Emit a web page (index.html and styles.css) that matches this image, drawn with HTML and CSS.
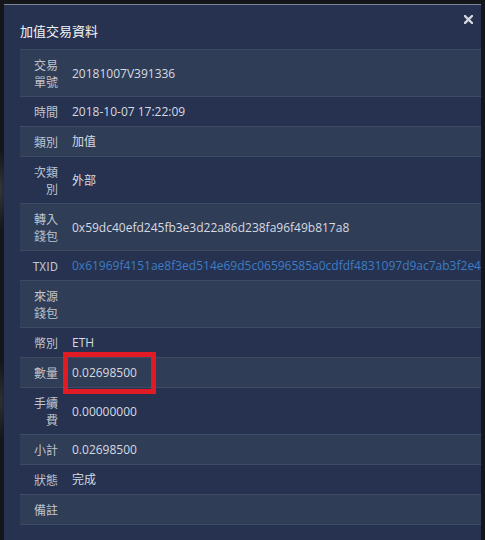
FILE: index.html
```html
<!DOCTYPE html>
<html lang="zh-Hant">
<head>
<meta charset="utf-8">
<title>加值交易資料</title>
<link rel="stylesheet" href="styles.css">
</head>
<body>
<div class="modal">
  <button class="close" aria-label="close">
    <svg width="9" height="9" viewBox="0 0 9 9"><path d="M1 1 L8 8 M8 1 L1 8" stroke="#d3d7de" stroke-width="2.4" stroke-linecap="square"/></svg>
  </button>
  <h1 class="title">加值交易資料</h1>
  <div class="table">
    <div class="row alt"><div class="label">交易單號</div><div class="value">20181007V391336</div></div>
    <div class="row"><div class="label">時間</div><div class="value">2018-10-07 17:22:09</div></div>
    <div class="row alt"><div class="label">類別</div><div class="value">加值</div></div>
    <div class="row"><div class="label">次類別</div><div class="value">外部</div></div>
    <div class="row alt"><div class="label">轉入錢包</div><div class="value">0x59dc40efd245fb3e3d22a86d238fa96f49b817a8</div></div>
    <div class="row"><div class="label">TXID</div><div class="value link">0x61969f4151ae8f3ed514e69d5c06596585a0cdfdf4831097d9ac7ab3f2e47</div></div>
    <div class="row alt"><div class="label">來源錢包</div><div class="value"></div></div>
    <div class="row"><div class="label">幣別</div><div class="value">ETH</div></div>
    <div class="row alt marked"><div class="label">數量</div><div class="value">0.02698500</div><span class="mark"></span></div>
    <div class="row"><div class="label">手續費</div><div class="value">0.00000000</div></div>
    <div class="row alt"><div class="label">小計</div><div class="value">0.02698500</div></div>
    <div class="row"><div class="label">狀態</div><div class="value">完成</div></div>
    <div class="row alt"><div class="label">備註</div><div class="value"></div></div>
  </div>
</div>
</body>
</html>
```
FILE: styles.css
```css
html, body {
  margin: 0;
  padding: 0;
}
body {
  width: 485px;
  height: 540px;
  overflow: hidden;
  background:
    radial-gradient(ellipse 10px 40px at 0 190px, #34363b, transparent),
    radial-gradient(ellipse 10px 40px at 0 400px, #2e3034, transparent),
    #14161a;
  font-family: "Open Sans", "Noto Sans CJK TC", sans-serif;
}
.modal {
  position: relative;
  margin: 4px 4px 0 4px;
  height: 540px;
  background: #263250;
  border-top: 1px solid #7c8699;
  overflow: hidden;
  padding: 16px 0 16px 16px;
  box-sizing: border-box;
}
.close {
  position: absolute;
  top: 8px;
  right: 6px;
  width: 13px;
  height: 13px;
  padding: 2px;
  border: 0;
  background: transparent;
  display: flex;
  align-items: center;
  justify-content: center;
}
.title {
  margin: 0 0 9px 0;
  font-family: "Noto Sans CJK TC", sans-serif;
  font-size: 13px;
  line-height: 19px;
  font-weight: normal;
  color: #f2f4f7;
}
.table {
  border-top: 1px solid #3f4b64;
}
.row {
  display: flex;
  align-items: center;
  border-bottom: 1px solid #3f4b64;
  padding: 6px 0;
  font-size: 12px;
  line-height: 17px;
}
.row.alt {
  background: #303d57;
}
.label {
  flex: 0 0 44px;
  box-sizing: border-box;
  padding: 0 6px 0 8px;
  text-align: right;
  color: #bfc4cd;
  font-family: "Noto Sans CJK TC", sans-serif;
  font-size: 12px;
}
.row .label:lang(zh-Hant) {
  word-break: break-all;
}
.value {
  padding-left: 8px;
  white-space: nowrap;
  color: #d6dae1;
  min-height: 17px;
  font-family: "Open Sans", "Noto Sans CJK TC", sans-serif;
}
.value.link {
  color: #3d7dc4;
}
.marked {
  position: relative;
}
.mark {
  position: absolute;
  left: 43px;
  top: -6px;
  width: 93px;
  height: 42px;
  box-sizing: border-box;
  border: 5px solid #e11b24;
}
```
